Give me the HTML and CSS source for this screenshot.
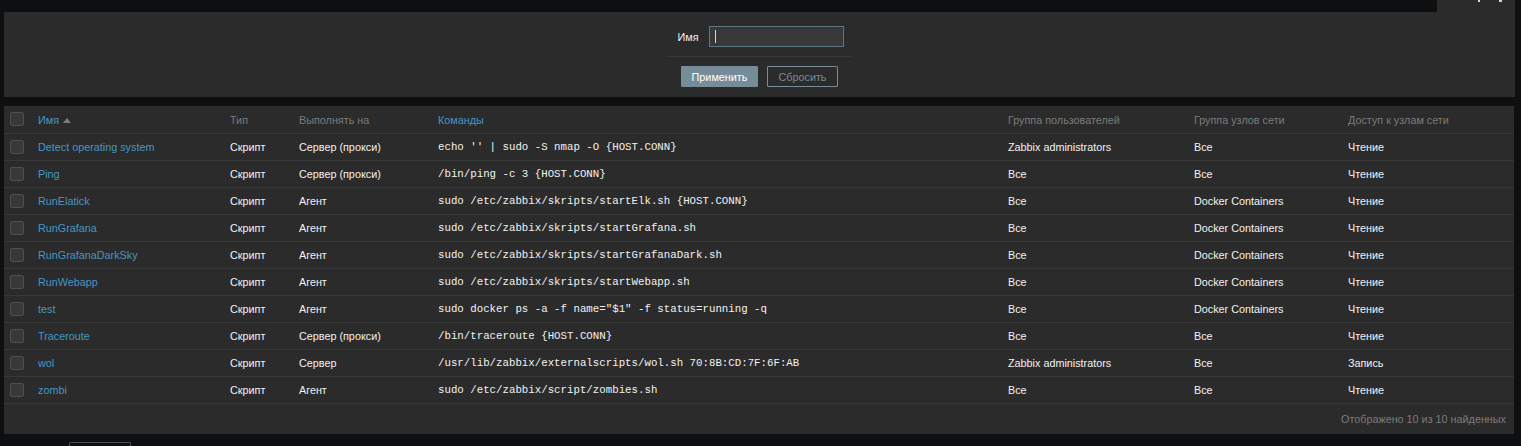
FILE: index.html
```html
<!DOCTYPE html>
<html lang="ru">
<head>
<meta charset="utf-8">
<title>Скрипты</title>
<link rel="stylesheet" href="styles.css">
</head>
<body>
<div class="topbar">
  <div class="tab"><span class="tick t1"></span><span class="tick t2"></span></div>
</div>
<form class="filter">
  <div class="filter-row">
    <label class="flabel">Имя</label>
    <div class="input-wrap"><input class="finput" type="text" value=""><span class="caret"></span></div>
  </div>
  <div class="filter-sep"></div>
  <div class="filter-buttons">
    <button type="button" class="btn btn-main">Применить</button>
    <button type="button" class="btn btn-alt">Сбросить</button>
  </div>
</form>
<div class="panel">
  <table class="list">
    <colgroup>
      <col class="c-chk"><col class="c-name"><col class="c-type"><col class="c-exec"><col class="c-cmd"><col class="c-ug"><col class="c-hg"><col class="c-acc">
    </colgroup>
    <thead>
      <tr>
        <th><span class="chk"></span></th>
        <th><a class="link">Имя</a><span class="arrow"></span></th>
        <th>Тип</th>
        <th>Выполнять на</th>
        <th><a class="link">Команды</a></th>
        <th>Группа пользователей</th>
        <th>Группа узлов сети</th>
        <th>Доступ к узлам сети</th>
      </tr>
    </thead>
    <tbody>
      <tr><td><span class="chk"></span></td><td><a class="link">Detect operating system</a></td><td>Скрипт</td><td>Сервер (прокси)</td><td class="mono">echo '' | sudo -S nmap -O {HOST.CONN}</td><td>Zabbix administrators</td><td>Все</td><td>Чтение</td></tr>
      <tr><td><span class="chk"></span></td><td><a class="link">Ping</a></td><td>Скрипт</td><td>Сервер (прокси)</td><td class="mono">/bin/ping -c 3 {HOST.CONN}</td><td>Все</td><td>Все</td><td>Чтение</td></tr>
      <tr><td><span class="chk"></span></td><td><a class="link">RunElatick</a></td><td>Скрипт</td><td>Агент</td><td class="mono">sudo /etc/zabbix/skripts/startElk.sh {HOST.CONN}</td><td>Все</td><td>Docker Containers</td><td>Чтение</td></tr>
      <tr><td><span class="chk"></span></td><td><a class="link">RunGrafana</a></td><td>Скрипт</td><td>Агент</td><td class="mono">sudo /etc/zabbix/skripts/startGrafana.sh</td><td>Все</td><td>Docker Containers</td><td>Чтение</td></tr>
      <tr><td><span class="chk"></span></td><td><a class="link">RunGrafanaDarkSky</a></td><td>Скрипт</td><td>Агент</td><td class="mono">sudo /etc/zabbix/skripts/startGrafanaDark.sh</td><td>Все</td><td>Docker Containers</td><td>Чтение</td></tr>
      <tr><td><span class="chk"></span></td><td><a class="link">RunWebapp</a></td><td>Скрипт</td><td>Агент</td><td class="mono">sudo /etc/zabbix/skripts/startWebapp.sh</td><td>Все</td><td>Docker Containers</td><td>Чтение</td></tr>
      <tr><td><span class="chk"></span></td><td><a class="link">test</a></td><td>Скрипт</td><td>Агент</td><td class="mono">sudo docker ps -a -f name="$1" -f status=running -q</td><td>Все</td><td>Docker Containers</td><td>Чтение</td></tr>
      <tr><td><span class="chk"></span></td><td><a class="link">Traceroute</a></td><td>Скрипт</td><td>Сервер (прокси)</td><td class="mono">/bin/traceroute {HOST.CONN}</td><td>Все</td><td>Все</td><td>Чтение</td></tr>
      <tr><td><span class="chk"></span></td><td><a class="link">wol</a></td><td>Скрипт</td><td>Сервер</td><td class="mono">/usr/lib/zabbix/externalscripts/wol.sh 70:8B:CD:7F:6F:AB</td><td>Zabbix administrators</td><td>Все</td><td>Запись</td></tr>
      <tr><td><span class="chk"></span></td><td><a class="link">zombi</a></td><td>Скрипт</td><td>Агент</td><td class="mono">sudo /etc/zabbix/script/zombies.sh</td><td>Все</td><td>Все</td><td>Чтение</td></tr>
    </tbody>
  </table>
  <div class="footer">Отображено 10 из 10 найденных</div>
</div>
<div class="below"><span class="below-btn"></span></div>
</body>
</html>
```
FILE: styles.css
```css
html, body {
  margin: 0;
  padding: 0;
  background: #0e0f11;
  font-family: "Liberation Sans", Arial, sans-serif;
  font-size: 10.8px;
  color: #f2f2f2;
  overflow: hidden;
}

.topbar {
  height: 12px;
  display: flex;
  justify-content: flex-end;
  padding-right: 6px;
}
.tab {
  width: 78px;
  height: 12px;
  background: #2b2b2b;
  position: relative;
}
.tick {
  position: absolute;
  top: 0;
  width: 2px;
  height: 2px;
  background: #cfd8e6;
}
.t1 { left: 41px; }
.t2 { left: 62px; width: 3px; }

.filter {
  margin: 0 6px 9px 4px;
  height: 85px;
  box-sizing: border-box;
  background: #2b2b2b;
  padding-top: 14px;
  display: flex;
  flex-direction: column;
  align-items: center;
}
.filter-row {
  display: flex;
  align-items: center;
  gap: 10px;
  height: 20px;
  padding-left: 2px;
}
.flabel {
  color: #f2f2f2;
  font-size: 10.8px;
  padding-top: 1px;
}
.input-wrap {
  position: relative;
}
.finput {
  display: block;
  width: 135px;
  height: 21px;
  box-sizing: border-box;
  background: #383838;
  border: 1px solid #5d7683;
  outline: none;
  margin: 0;
  padding: 0 5px;
  color: #f2f2f2;
}
.caret {
  position: absolute;
  left: 6px;
  top: 4px;
  width: 1px;
  height: 13px;
  background: #d8d8d8;
}
.filter-sep {
  width: 183px;
  height: 1px;
  background: #383838;
  margin: 10px 0 9px;
}
.filter-buttons {
  display: flex;
  gap: 9px;
}
.btn {
  height: 21px;
  box-sizing: border-box;
  border: 1px solid #768d99;
  font-family: "Liberation Sans", Arial, sans-serif;
  font-size: 10.8px;
  padding: 0;
  margin: 0;
  border-radius: 1px;
}
.btn-main {
  width: 77px;
  background: #768d99;
  color: #ffffff;
}
.btn-alt {
  width: 71px;
  background: transparent;
  color: #768d99;
}

.panel {
  margin: 0 7px 0 4px;
  background: #2b2b2b;
}
.list {
  width: 1510px;
  table-layout: fixed;
  border-collapse: collapse;
}
.c-chk { width: 28px; }
.c-name { width: 192px; }
.c-type { width: 69px; }
.c-exec { width: 139px; }
.c-cmd { width: 570px; }
.c-ug { width: 186px; }
.c-hg { width: 154px; }
.c-acc { width: 172px; }

.list th,
.list td {
  height: 27px;
  padding: 1px 6px 0;
  box-sizing: border-box;
  border-bottom: 1px solid #383838;
  text-align: left;
  vertical-align: middle;
  white-space: nowrap;
  overflow: hidden;
  font-size: 10.8px;
  line-height: 14px;
}
.list th {
  font-weight: normal;
  color: #7b7b7b;
}
.list td {
  color: #f2f2f2;
}
.list th:first-child,
.list td:first-child {
  padding: 0 0 0 6px;
}
.chk {
  display: block;
  width: 14px;
  height: 14px;
  box-sizing: border-box;
  background: #383838;
  border: 1px solid #4f4f4f;
  border-radius: 2px;
}
.link {
  color: #4796c4;
  text-decoration: none;
}
.arrow {
  display: inline-block;
  margin-left: 4px;
  width: 0;
  height: 0;
  border-left: 4px solid transparent;
  border-right: 4px solid transparent;
  border-bottom: 5px solid #7b7b7b;
  vertical-align: 1px;
}
.list td.mono {
  font-family: "Liberation Mono", "Courier New", monospace;
  font-size: 10.75px;
}

.footer {
  height: 30px;
  display: flex;
  align-items: center;
  justify-content: flex-end;
  padding-right: 8px;
  padding-top: 1px;
  box-sizing: border-box;
  color: #7b7b7b;
  font-size: 10.8px;
}

.below {
  padding: 8px 0 0 69px;
}
.below-btn {
  display: block;
  width: 62px;
  height: 10px;
  box-sizing: border-box;
  border: 1px solid #4f4f4f;
  border-bottom: none;
  border-radius: 2px 2px 0 0;
}
```
